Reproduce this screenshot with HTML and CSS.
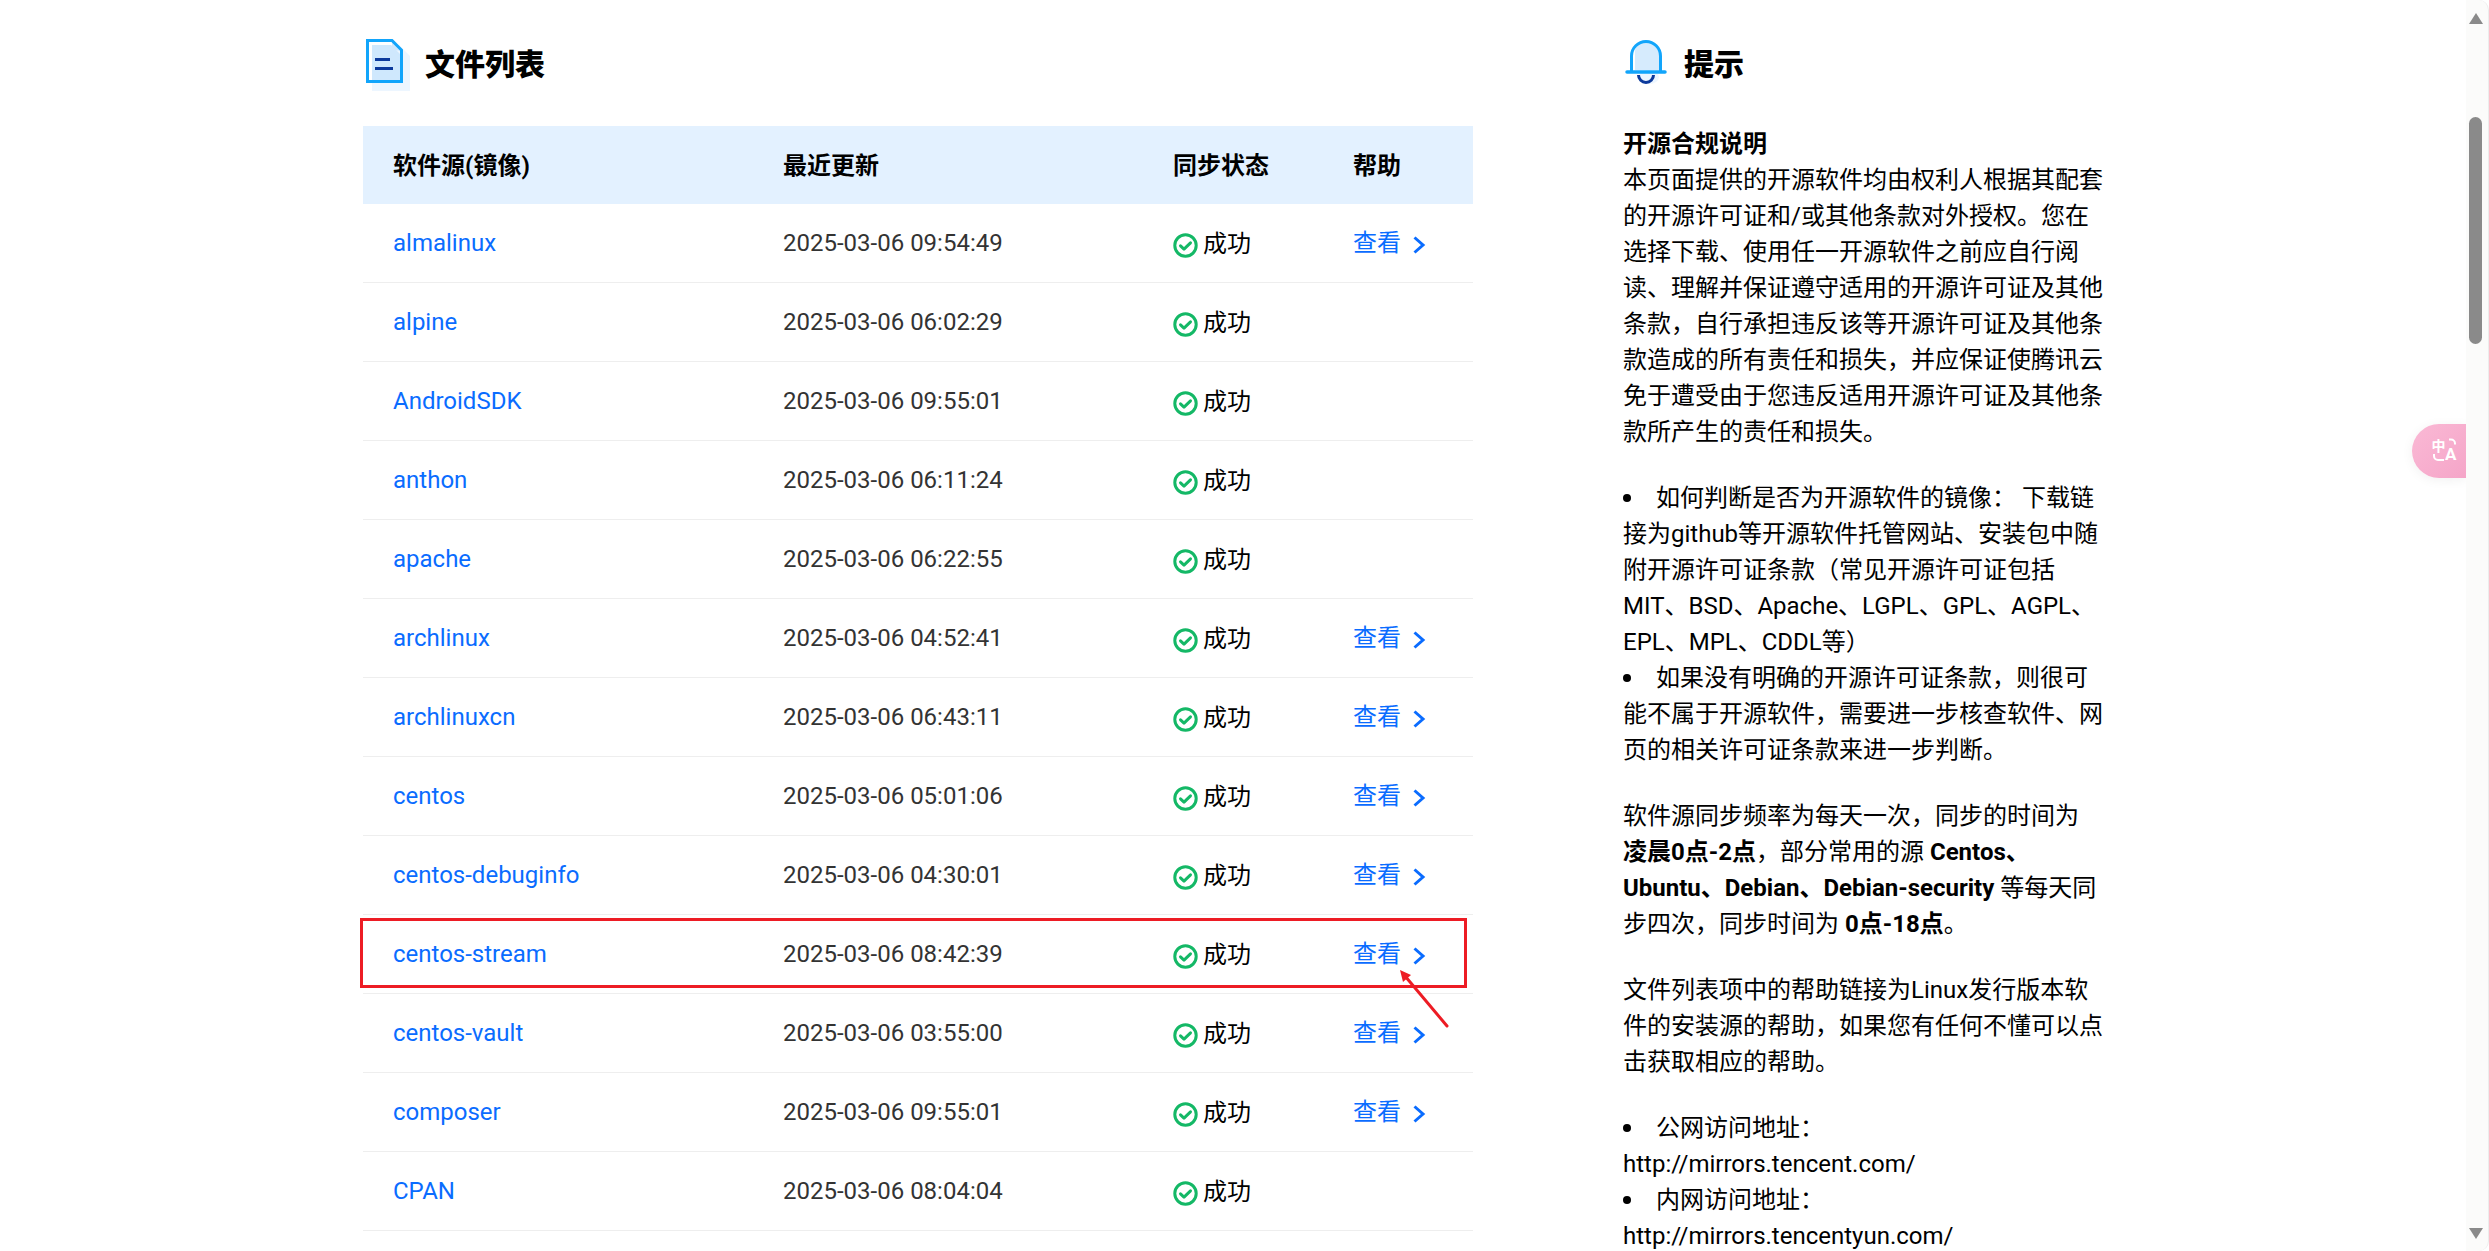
FILE: index.html
```html
<!DOCTYPE html>
<html lang="zh-CN">
<head>
<meta charset="utf-8">
<title>文件列表</title>
<link rel="stylesheet" href="styles.css">
</head>
<body>
<svg class="sprite" aria-hidden="true">
  <symbol id="i-ok" viewBox="0 0 25 25">
    <circle cx="12.500" cy="12.500" r="10.700" fill="none" stroke="#14b866" stroke-width="3"/>
    <path d="M7.500 12.800l3.500 3.300 6.500-6.200" fill="none" stroke="#14b866" stroke-width="3" stroke-linecap="round" stroke-linejoin="round"/>
  </symbol>
  <symbol id="i-go" viewBox="0 0 14 18">
    <path d="M1.500 1.500l8.500 7.500-8.500 7.500" fill="none" stroke="currentColor" stroke-width="3"/>
  </symbol>
</svg>
<div class="window">
  <main class="page">
    <section class="files">
      <h2 class="section-title">
        <svg class="icon-file" viewBox="0 0 44 52" width="44" height="52" aria-hidden="true">
          <path d="M6 6h27l11 11v35H6z" fill="#edf6ff"/>
          <path d="M6 6h19l9 9v26H6z" fill="#cfe8fd"/>
          <path d="M26 2l9 9.500H26z" fill="#cfe8fd"/>
          <path d="M1.500 1.500H26L35.500 11v31.500H1.500z" fill="none" stroke="#12a5fb" stroke-width="3"/>
          <rect x="9" y="19" width="15" height="3" fill="#0c3a9c"/>
          <rect x="9" y="28" width="18" height="3" fill="#0c3a9c"/>
        </svg>
        文件列表
      </h2>
      <table class="mirrors">
        <colgroup><col class="c1"><col class="c2"><col class="c3"><col class="c4"></colgroup>
        <thead>
          <tr><th>软件源(镜像)</th><th>最近更新</th><th>同步状态</th><th>帮助</th></tr>
        </thead>
        <tbody>
          <tr><td><a href="#">almalinux</a></td><td>2025-03-06 09:54:49</td><td><span class="ok"><svg class="i-ok"><use href="#i-ok"/></svg>成功</span></td><td><a class="help" href="#">查看<svg class="i-go"><use href="#i-go"/></svg></a></td></tr>
          <tr><td><a href="#">alpine</a></td><td>2025-03-06 06:02:29</td><td><span class="ok"><svg class="i-ok"><use href="#i-ok"/></svg>成功</span></td><td></td></tr>
          <tr><td><a href="#">AndroidSDK</a></td><td>2025-03-06 09:55:01</td><td><span class="ok"><svg class="i-ok"><use href="#i-ok"/></svg>成功</span></td><td></td></tr>
          <tr><td><a href="#">anthon</a></td><td>2025-03-06 06:11:24</td><td><span class="ok"><svg class="i-ok"><use href="#i-ok"/></svg>成功</span></td><td></td></tr>
          <tr><td><a href="#">apache</a></td><td>2025-03-06 06:22:55</td><td><span class="ok"><svg class="i-ok"><use href="#i-ok"/></svg>成功</span></td><td></td></tr>
          <tr><td><a href="#">archlinux</a></td><td>2025-03-06 04:52:41</td><td><span class="ok"><svg class="i-ok"><use href="#i-ok"/></svg>成功</span></td><td><a class="help" href="#">查看<svg class="i-go"><use href="#i-go"/></svg></a></td></tr>
          <tr><td><a href="#">archlinuxcn</a></td><td>2025-03-06 06:43:11</td><td><span class="ok"><svg class="i-ok"><use href="#i-ok"/></svg>成功</span></td><td><a class="help" href="#">查看<svg class="i-go"><use href="#i-go"/></svg></a></td></tr>
          <tr><td><a href="#">centos</a></td><td>2025-03-06 05:01:06</td><td><span class="ok"><svg class="i-ok"><use href="#i-ok"/></svg>成功</span></td><td><a class="help" href="#">查看<svg class="i-go"><use href="#i-go"/></svg></a></td></tr>
          <tr><td><a href="#">centos-debuginfo</a></td><td>2025-03-06 04:30:01</td><td><span class="ok"><svg class="i-ok"><use href="#i-ok"/></svg>成功</span></td><td><a class="help" href="#">查看<svg class="i-go"><use href="#i-go"/></svg></a></td></tr>
          <tr><td><a href="#">centos-stream</a></td><td>2025-03-06 08:42:39</td><td><span class="ok"><svg class="i-ok"><use href="#i-ok"/></svg>成功</span></td><td><a class="help" href="#">查看<svg class="i-go"><use href="#i-go"/></svg></a></td></tr>
          <tr><td><a href="#">centos-vault</a></td><td>2025-03-06 03:55:00</td><td><span class="ok"><svg class="i-ok"><use href="#i-ok"/></svg>成功</span></td><td><a class="help" href="#">查看<svg class="i-go"><use href="#i-go"/></svg></a></td></tr>
          <tr><td><a href="#">composer</a></td><td>2025-03-06 09:55:01</td><td><span class="ok"><svg class="i-ok"><use href="#i-ok"/></svg>成功</span></td><td><a class="help" href="#">查看<svg class="i-go"><use href="#i-go"/></svg></a></td></tr>
          <tr><td><a href="#">CPAN</a></td><td>2025-03-06 08:04:04</td><td><span class="ok"><svg class="i-ok"><use href="#i-ok"/></svg>成功</span></td><td></td></tr>
        </tbody>
      </table>
    </section>
    <aside class="tips">
      <h2 class="section-title tips-title">
        <svg class="icon-bell" viewBox="0 0 42 52" width="42" height="52" aria-hidden="true">
          <ellipse cx="24" cy="38" rx="10" ry="7" fill="#edf6ff"/>
          <path d="M13.500 36a7.500 7.500 0 0 0 15 0" fill="none" stroke="#0c3a9c" stroke-width="3"/>
          <path d="M10 31V15a12 12 0 0 1 24-3v19z" fill="#d6ebfd"/>
          <path d="M6.500 32V17a14.500 14.500 0 0 1 29 0v15" fill="none" stroke="#12a5fb" stroke-width="3"/>
          <path d="M2 33h38" stroke="#12a5fb" stroke-width="3.500" stroke-linecap="round"/>
        </svg>
        提示
      </h2>
      <div class="tips-body">
        <p><strong>开源合规说明</strong><br>本页面提供的开源软件均由权利人根据其配套的开源许可证和/或其他条款对外授权。您在选择下载、使用任一开源软件之前应自行阅读、理解并保证遵守适用的开源许可证及其他条款，自行承担违反该等开源许可证及其他条款造成的所有责任和损失，并应保证使腾讯云免于遭受由于您违反适用开源许可证及其他条款所产生的责任和损失。</p>
        <ul>
          <li>如何判断是否为开源软件的镜像： 下载链接为github等开源软件托管网站、安装包中随附开源许可证条款（常见开源许可证包括MIT、BSD、Apache、LGPL、GPL、AGPL、EPL、MPL、CDDL等）</li>
          <li>如果没有明确的开源许可证条款，则很可能不属于开源软件，需要进一步核查软件、网页的相关许可证条款来进一步判断。</li>
        </ul>
        <p>软件源同步频率为每天一次，同步的时间为 <strong>凌晨0点-2点</strong>，部分常用的源 <strong>Centos、Ubuntu、Debian、Debian-security</strong> 等每天同步四次，同步时间为 <strong>0点-18点</strong>。</p>
        <p>文件列表项中的帮助链接为Linux发行版本软件的安装源的帮助，如果您有任何不懂可以点击获取相应的帮助。</p>
        <ul>
          <li>公网访问地址： http://mirrors.tencent.com/</li>
          <li>内网访问地址： http://mirrors.tencentyun.com/</li>
        </ul>
      </div>
    </aside>
    <div class="mark-box"></div>
    <svg class="mark-arrow" viewBox="0 0 60 70" width="60" height="70" aria-hidden="true">
      <path d="M53 62L11 12" stroke="#ed1c24" stroke-width="3" stroke-linecap="round"/>
      <path d="M6 6l11 5-8 7z" fill="#ed1c24"/>
    </svg>
    <div class="translate-pill">
      <svg viewBox="0 0 30 30" width="30" height="30" aria-hidden="true">
        <text x="4.500" y="15" class="pill-zh">中</text>
        <text x="18" y="24" class="pill-en">A</text>
        <path d="M22 3.500h2a4 4 0 0 1 4 4v1" fill="none" stroke="#fff" stroke-width="2"/>
        <path d="M7 18v2a4 4 0 0 0 4 4h6" fill="none" stroke="#fff" stroke-width="2"/>
      </svg>
    </div>
  </main>
  <div class="scrollbar">
    <span class="arrow arrow-up"></span>
    <span class="thumb"></span>
    <span class="arrow arrow-down"></span>
  </div>
</div>
</body>
</html>
```
FILE: styles.css
```css
* { box-sizing: border-box; }
html, body { margin: 0; height: 100%; overflow: hidden; background: #fff; }
body {
  font-family: Roboto, "Noto Sans CJK SC", sans-serif;
  font-size: 24px;
  color: #000;
}
.sprite { display: none; }
.window { display: flex; height: 100vh; }
.page {
  position: relative;
  flex: 1;
  min-width: 0;
  display: flex;
  gap: 150px;
  padding: 39px 0 0 363px;
  overflow: hidden;
}
.files { width: 1110px; flex: none; }
.tips { width: 484px; flex: none; }
.section-title {
  display: flex;
  align-items: center;
  gap: 15px;
  height: 52px;
  margin: 0 0 35px 3px;
  font-size: 30px;
  line-height: 52px;
  font-weight: 900;
}
.tips-title { gap: 17px; margin-left: 2px; }
.mirrors { width: 1110px; table-layout: fixed; border-collapse: separate; border-spacing: 0; }
.c1, .c2 { width: 390px; }
.c3 { width: 180px; }
.c4 { width: 150px; }
.mirrors th {
  height: 78px;
  padding: 0 0 3px 30px;
  background: #e3f1ff;
  text-align: left;
  font-weight: 700;
}
.mirrors td {
  height: 79px;
  padding: 0 0 0 30px;
  border-bottom: 1px solid #eee;
  color: #333;
  line-height: 36px;
}
.mirrors a { color: #0a6cff; text-decoration: none; }
.ok {
  display: inline-flex;
  align-items: center;
  gap: 5px;
  margin-top: 2px;
  color: #000;
  vertical-align: top;
}
.i-ok { width: 25px; height: 25px; flex: none; margin-top: 3px; }
.help {
  display: inline-flex;
  align-items: center;
  gap: 12px;
  vertical-align: top;
}
.i-go { width: 14px; height: 18px; flex: none; margin-top: 3px; }
.tips-body { line-height: 36px; }
.tips-body p { margin: 0 0 30px; }
.tips-body ul { margin: 0 0 30px; padding: 0; list-style: none; }
.tips-body li::before {
  content: "";
  display: inline-block;
  width: 8px;
  height: 8px;
  margin: 0 25px 4px 0;
  border-radius: 50%;
  background: #000;
}
.mark-box {
  position: absolute;
  left: 360px;
  top: 918px;
  width: 1107px;
  height: 70px;
  border: 3px solid #ed1c24;
}
.mark-arrow { position: absolute; left: 1394px; top: 964px; }
.translate-pill {
  position: absolute;
  right: 0;
  top: 424px;
  width: 54px;
  height: 54px;
  display: flex;
  align-items: center;
  justify-content: flex-start;
  padding-left: 15px;
  border-radius: 27px 0 0 27px;
  background: linear-gradient(135deg, #fab9d5, #f5a5c8);
  box-shadow: 0 2px 12px rgba(0, 0, 0, .06);
}
.pill-zh { font: 700 14px "Noto Sans CJK SC", sans-serif; fill: #fff; }
.pill-en { font: 700 17px Roboto, sans-serif; fill: #fff; }
.scrollbar {
  width: 23px;
  flex: none;
  display: flex;
  flex-direction: column;
  align-items: center;
  padding: 13px 3px 12px 0;
  background: #fbfbfa;
  border-right: 1px solid #ececec;
  border-radius: 0 10px 10px 0;
}
.arrow { width: 0; height: 0; border-left: 7.500px solid transparent; border-right: 7.500px solid transparent; }
.arrow-up { border-bottom: 11px solid #8a8a8a; }
.arrow-down { border-top: 11px solid #8a8a8a; margin-top: auto; }
.thumb { width: 13px; height: 227px; margin-top: 93px; border-radius: 7px; background: #8a8a8a; }
```
